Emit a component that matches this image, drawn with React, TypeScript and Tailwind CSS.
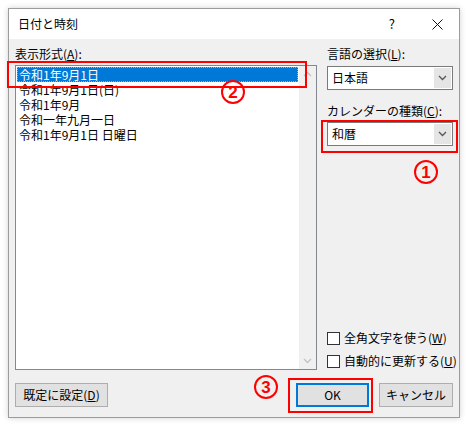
import React from "react";

const F = { fontFamily: '"Noto Sans CJK JP", "Noto Sans", sans-serif' };

function Chevron({ up = false, color = "#606060" }: { up?: boolean; color?: string }) {
  return (
    <svg width="9" height="6" viewBox="0 0 9 6">
      <polyline
        points={up ? "1,5 4.5,1.5 8,5" : "1,1 4.5,4.5 8,1"}
        fill="none"
        stroke={color}
        strokeWidth="1.3"
      />
    </svg>
  );
}

function Dropdown({ value }: { value: string }) {
  return (
    <div className="h-[24px] border border-[#7a7a7a] bg-white flex">
      <div className="flex-1 pl-[4px] text-[12px] leading-[22px] text-black">{value}</div>
      <div className="w-[17px] m-[1px] bg-[#e5e5e5] flex items-center justify-center">
        <Chevron color="#555" />
      </div>
    </div>
  );
}

function Check({ label, u }: { label: string; u: string }) {
  return (
    <div className="flex items-center h-[16px] whitespace-nowrap">
      <div className="w-[13px] h-[13px] shrink-0 border border-[#333] bg-white" />
      <span className="ml-[4px] text-[12px] leading-[16px] text-black">
        {label}(<span className="underline">{u}</span>)
      </span>
    </div>
  );
}

function Circ({ n, x, y }: { n: string; x: number; y: number }) {
  return (
    <div
      className="absolute w-[24px] h-[24px] rounded-full border-2 border-[#ff0000] bg-white/0 flex items-center justify-center text-[17px] font-semibold leading-none text-[#ff0000]"
      style={{ left: x - 12, top: y - 12, fontFamily: '"Liberation Sans", Arial, sans-serif' }}
    >
      {n}
    </div>
  );
}

export default function App() {
  const rows = ["令和1年9月1日", "令和1年9月1日(日)", "令和1年9月", "令和一年九月一日", "令和1年9月1日 日曜日"];
  return (
    <div className="relative w-[468px] h-[426px] bg-white overflow-hidden" style={F}>
      <div className="ml-[8px] mt-[8px] w-[452px] h-[410px] border border-[#9c9c9c] flex flex-col shadow-[0_0_6px_rgba(0,0,0,0.18)]">
        {/* title bar */}
        <div className="h-[30px] bg-white flex items-center pl-[9px] pr-[16px]">
          <span className="text-[12px] text-black">日付と時刻</span>
          <div className="flex-1" />
          <span className="text-[13px] text-black mr-[37px]">?</span>
          <svg width="11" height="11" viewBox="0 0 11 11">
            <path d="M0.5 0.5 L10.5 10.5 M10.5 0.5 L0.5 10.5" stroke="#111" strokeWidth="1" />
          </svg>
        </div>
        {/* body */}
        <div className="flex-1 bg-[#f0f0f0] px-[6px] pt-[7px] flex flex-col">
          <div className="flex">
            <div className="w-[302px] flex flex-col">
              <div className="h-[16px] leading-[16px] text-[12px] text-black mb-[3px]">
                表示形式(<span className="underline">A</span>):
              </div>
              <div className="h-[305px] border border-[#828790] bg-white flex">
                <div className="flex-1 p-[1px] flex flex-col">
                  {rows.map((r, i) => (
                    <div
                      key={r}
                      className={
                        i === 0
                          ? "h-[15px] leading-[13px] text-[12px] pl-[1px] bg-[#0078d7] text-white border border-dotted border-[#e8a040] overflow-hidden"
                          : "h-[15px] leading-[15px] text-[12px] pl-[2px] text-black overflow-hidden"
                      }
                    >
                      {r}
                    </div>
                  ))}
                </div>
                <div className="w-[17px] bg-[#f0f0f0] flex flex-col items-center justify-between py-[5px]">
                  <Chevron up color="#c2c2c2" />
                  <Chevron color="#c2c2c2" />
                </div>
              </div>
            </div>
            <div className="ml-[10px] w-[126px] flex flex-col">
              <div className="h-[16px] leading-[16px] text-[12px] text-black">
                言語の選択(<span className="underline">L</span>):
              </div>
              <div className="mt-[4px]">
                <Dropdown value="日本語" />
              </div>
              <div className="mt-[13px] h-[16px] leading-[16px] text-[12px] text-black whitespace-nowrap">
                カレンダーの種類(<span className="underline">C</span>):
              </div>
              <div className="mt-[3px]">
                <Dropdown value="和暦" />
              </div>
              <div className="flex-1" />
              <Check label="全角文字を使う" u="W" />
              <div className="h-[7px]" />
              <Check label="自動的に更新する" u="U" />
              <div className="h-[1px]" />
            </div>
          </div>
          <div className="mt-[13px] flex h-[24px]">
            <div className="w-[93px] border border-[#adadad] bg-[#e1e1e1] flex items-center justify-center text-[12px] text-black">
              既定に設定(<span className="underline">D</span>)
            </div>
            <div className="flex-1" />
            <div className="w-[73px] border-2 border-[#0078d7] bg-[#e1e1e1] flex items-center justify-center text-[12px] text-black">
              OK
            </div>
            <div className="ml-[10px] w-[74px] border border-[#adadad] bg-[#e1e1e1] flex items-center justify-center text-[12px] text-black">
              キャンセル
            </div>
          </div>
        </div>
      </div>

      {/* annotations */}
      <div className="absolute left-[7px] top-[61px] w-[300px] h-[27px] border-2 border-[#ff0000]" />
      <div className="absolute left-[321px] top-[120px] w-[137px] h-[33px] border-2 border-[#ff0000]" />
      <div className="absolute left-[288px] top-[378px] w-[85px] h-[35px] border-2 border-[#ff0000]" />
      <Circ n="2" x={233} y={92} />
      <Circ n="1" x={426} y={172} />
      <Circ n="3" x={266} y={387} />
    </div>
  );
}
